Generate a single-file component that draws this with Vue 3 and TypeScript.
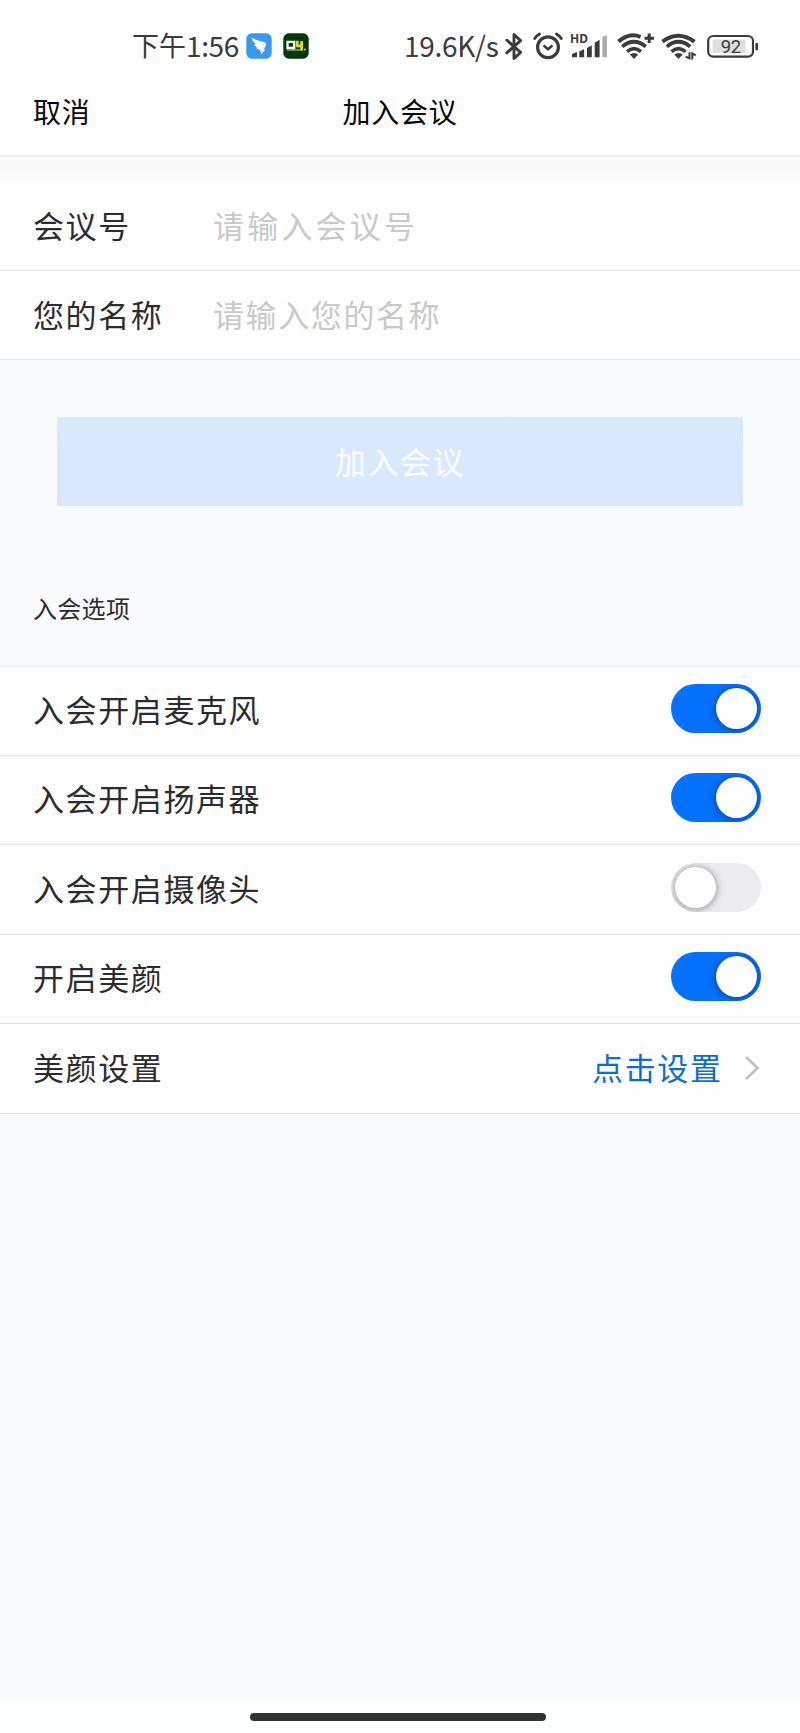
<script setup lang="ts">
import { ref } from 'vue'

interface Field {
  label: string
  hint: string
  wide: boolean
}

interface Option {
  label: string
  on: boolean
}

const fields: Field[] = [
  { label: '会议号', hint: '请输入会议号', wide: true },
  { label: '您的名称', hint: '请输入您的名称', wide: false },
]

const options = ref<Option[]>([
  { label: '入会开启麦克风', on: true },
  { label: '入会开启扬声器', on: true },
  { label: '入会开启摄像头', on: false },
  { label: '开启美颜', on: true },
])
</script>

<template>
  <div class="screen">
    <div class="status">
      <span class="clock"><span>下午</span><span class="time">1:56</span></span>
      <svg class="app-bird" width="26" height="26" viewBox="0 0 26 26">
        <rect x="0.3" y="0.3" width="25.4" height="25.4" rx="5.5" fill="#369bee" />
        <path d="M5.500 4.600C9 7 15 8 19.800 9.800c.9 3-1.200 5.200-2.400 6.800h2L14.700 22l.8-3.800h-1.700l.5-1.500c-2.200.1-3.500-.8-4.200-2.100l2 .1c-2.500-.8-3.700-2.100-4-3.800l2.400.6C7.500 9.300 6 7.300 5.500 4.600z" fill="#fff" />
      </svg>
      <svg class="app-green" width="26" height="26" viewBox="0 0 26 26">
        <rect x="0.3" y="0.3" width="25.4" height="25.4" rx="5.5" fill="#06380b" />
        <path d="M4.500 8.800H11.200V15H4.500z M9.500 14l2 2.500" fill="none" stroke="#fff" stroke-width="2.300" />
        <path d="M14.300 7.800v5h5M18.600 8v9.500" fill="none" stroke="#d6d92c" stroke-width="2.800" />
        <path d="M4 17h15" stroke="#93b65c" stroke-width="1.400" />
        <circle cx="21.800" cy="16.500" r="1.100" fill="#d6d92c" />
      </svg>
      <span class="speed">19.6K/s</span>
      <svg class="bluetooth" width="18" height="29" viewBox="0 0 18 29">
        <path d="M1.800 8.200L15.600 20.400 9 26.500V2.500l6.600 6.100L1.800 20.800" fill="none" stroke="#3b3b3b" stroke-width="2.900" stroke-linejoin="round" stroke-linecap="round" />
      </svg>
      <svg class="alarm" width="30" height="29" viewBox="0 0 30 29" fill="none" stroke="#3b3b3b" stroke-linecap="round">
        <circle cx="15" cy="15.200" r="10.400" stroke-width="3.200" />
        <path d="M11.500 14.200l3.500 3 3.500-3" stroke-width="2.700" stroke-linejoin="round" />
        <path d="M1.700 6.500Q3.400 3.700 6.500 2M28.300 6.500Q26.600 3.700 23.500 2" stroke-width="2.800" />
      </svg>
      <svg class="signal" width="38" height="34" viewBox="0 -8 38 34">
        <text x="0" y="10" class="hd">HD</text>
        <g fill="#3b3b3b">
          <path d="M2 21l5-2v5.200H2zM9.300 18.600l4.800-2.500v8.100H9.300zM17 14.900l4.800-2.600v11.900H17zM24.700 9.800l4.900-3v17.400h-4.900z" />
          <path d="M32.400 4l4.500-2v22.200h-4.500z" fill="#acacac" />
        </g>
      </svg>
      <svg class="wifi-plus" width="38" height="28" viewBox="0 0 38 28">
        <g fill="none" stroke="#3b3b3b">
          <path d="M1.500 9.600Q12.600 .1 23.500 5" stroke-width="3.900" />
          <path d="M5.200 14.700Q17 4.800 28.800 14.700" stroke-width="3.700" />
          <path d="M10 19.600Q17 13.600 24 19.600" stroke-width="3.700" />
          <path d="M27.500 6.300h9.500M32.200 1.500v9.500" stroke-width="3" />
        </g>
        <path d="M12.800 22.600Q17 19.300 21.200 22.600L17 27z" fill="#3b3b3b" />
      </svg>
      <svg class="wifi-data" width="36" height="28" viewBox="0 0 36 28">
        <g fill="none" stroke="#3b3b3b">
          <path d="M1.500 9.600Q17 -2.300 33.500 9.600" stroke-width="3.900" />
          <path d="M5.800 14.700Q17.500 4.800 29.200 14.700" stroke-width="3.700" />
          <path d="M10.500 19.600Q17.500 13.600 24.500 19.600" stroke-width="3.700" />
          <path d="M28.500 20.300v6l-3.800-1.500M31.300 27.500v-6l3.500 1.800" stroke-width="2" />
        </g>
        <path d="M13.300 22.600Q17.500 19.300 21.700 22.600L17.500 27z" fill="#3b3b3b" />
      </svg>
      <svg class="battery" width="53" height="25" viewBox="0 0 53 25">
        <rect x="1.200" y="2" width="44.800" height="20.600" rx="5" fill="#fff" stroke="#3b3b3b" stroke-width="2.200" />
        <rect x="5.500" y="5.500" width="33" height="13.600" rx="1.500" fill="#dfdfdf" />
        <rect x="48.400" y="9" width="2.700" height="7.200" rx="1" fill="#3b3b3b" />
        <text x="23.700" y="18.600" text-anchor="middle" class="charge">92</text>
      </svg>
    </div>

    <header class="header">
      <span class="cancel">取消</span>
      <span class="title">加入会议</span>
      <span></span>
    </header>

    <div class="band"></div>
    <div v-for="f in fields" :key="f.label" class="row field">
      <span class="label">{{ f.label }}</span>
      <span class="hint" :class="{ wide: f.wide }">{{ f.hint }}</span>
    </div>

    <div class="middle">
      <div class="join">加入会议</div>
      <div class="section">入会选项</div>
    </div>

    <div class="options">
      <div v-for="o in options" :key="o.label" class="row option">
        <span class="label">{{ o.label }}</span>
        <span class="toggle" :class="{ on: o.on }" @click="o.on = !o.on"><i class="knob"></i></span>
      </div>
      <div class="row option">
        <span class="label">美颜设置</span>
        <span class="link">
          <span class="label">点击设置</span>
          <svg width="16" height="26" viewBox="0 0 16 26">
            <path d="M2 2l11.500 11L2 24" fill="none" stroke="#c2c2c2" stroke-width="2.800" />
          </svg>
        </span>
      </div>
    </div>

    <div class="space"></div>
    <div class="nav"><div class="pill"></div></div>
  </div>
</template>

<style>
body {
  margin: 0;
}
</style>

<style scoped>
.screen {
  width: 800px;
  height: 1733px;
  display: flex;
  flex-direction: column;
  background: #f9fafc;
  color: #2c2c2e;
  font-family: "Noto Sans CJK SC", sans-serif;
  overflow: hidden;
}
.screen > * {
  flex: none;
  box-sizing: border-box;
}
.status {
  height: 80px;
  padding: 12px 0 0 132px;
  display: flex;
  align-items: center;
  background: #fefefe;
  color: #3b3b3b;
  white-space: nowrap;
}
.status svg {
  flex: none;
}
.clock {
  width: 114px;
  display: flex;
  font-size: 27px;
  line-height: 40px;
  padding-bottom: 3px;
}
.time {
  font-size: 28px;
  letter-spacing: -0.4px;
}
.app-green {
  margin-left: 11px;
}
.speed {
  width: 99px;
  margin-left: 95px;
  font-size: 28px;
  line-height: 40px;
  letter-spacing: -0.3px;
  padding-bottom: 3px;
}
.bluetooth {
  margin-left: 2px;
}
.alarm {
  margin-left: 10px;
}
.signal {
  margin: -8px 0 0 7px;
}
.hd {
  font: 700 12px "Noto Sans", sans-serif;
  fill: #3b3b3b;
}
.wifi-plus {
  margin-left: 9px;
}
.wifi-data {
  margin-left: 6px;
}
.battery {
  margin-left: 10px;
}
.charge {
  font: 400 18.5px Roboto, sans-serif;
  letter-spacing: -0.4px;
  fill: #3b3b3b;
}
.header {
  height: 77px;
  padding: 0 34px 13px 33px;
  display: grid;
  grid-template-columns: 1fr auto 1fr;
  align-items: center;
  background: #fefefe;
  border-bottom: 2px solid #f0f0f0;
  color: #080808;
  font-size: 28px;
  letter-spacing: 0.7px;
}
.title {
  padding-left: 1px;
}
.band {
  height: 25px;
  background: linear-gradient(#f7f7f7 0, #f8f8f8 60%, #fefefe 100%);
}
.row {
  display: flex;
  align-items: center;
  box-sizing: border-box;
  padding: 0 39px 0 33px;
  background: #fefefe;
  font-size: 31px;
  letter-spacing: 1.6px;
}
.label,
.hint {
  padding-bottom: 4px;
}
.field {
  height: 89px;
  border-bottom: 1px solid #e4e5e7;
}
.field .label {
  width: 180px;
}
.hint {
  color: #c9c9c9;
}
.hint.wide {
  letter-spacing: 3.2px;
}
.middle {
  height: 306px;
  padding-top: 57px;
}
.join {
  width: 686px;
  height: 89px;
  margin: 0 auto;
  background: linear-gradient(#d8eafe, #d8e7fd);
  color: #fbfdff;
  font-size: 31px;
  line-height: 88px;
  letter-spacing: 1.6px;
  text-align: center;
}
.section {
  margin: 84px 0 0 33px;
  font-size: 24px;
  line-height: 36px;
  letter-spacing: 0.3px;
}
.options {
  border-top: 1px solid #ebebed;
}
.option {
  height: 89.5px;
  justify-content: space-between;
  border-bottom: 1px solid #dfe0e2;
}
.option:first-child {
  height: 88.5px;
}
.toggle {
  width: 90px;
  height: 49px;
  padding: 4px;
  margin-bottom: 4px;
  display: flex;
  box-sizing: border-box;
  border-radius: 25px;
  background: #ececee;
  overflow: hidden;
}
.toggle.on {
  justify-content: flex-end;
  background: #0671fd;
}
.knob {
  width: 41px;
  height: 41px;
  border-radius: 50%;
  background: #fefefe;
  box-shadow: 0 1px 6px 2px rgba(0, 0, 0, 0.27);
}
.link {
  display: flex;
  align-items: center;
  gap: 21px;
  padding-right: 1.5px;
  color: #0d6cd3;
}
.space {
  flex: 1 1 0 !important;
}
.nav {
  height: 33px;
  padding-top: 13px;
  background: #fdfefe;
}
.pill {
  width: 296px;
  height: 8px;
  margin: 0 auto 0 249.5px;
  border-radius: 4px;
  background: #303030;
}
</style>
